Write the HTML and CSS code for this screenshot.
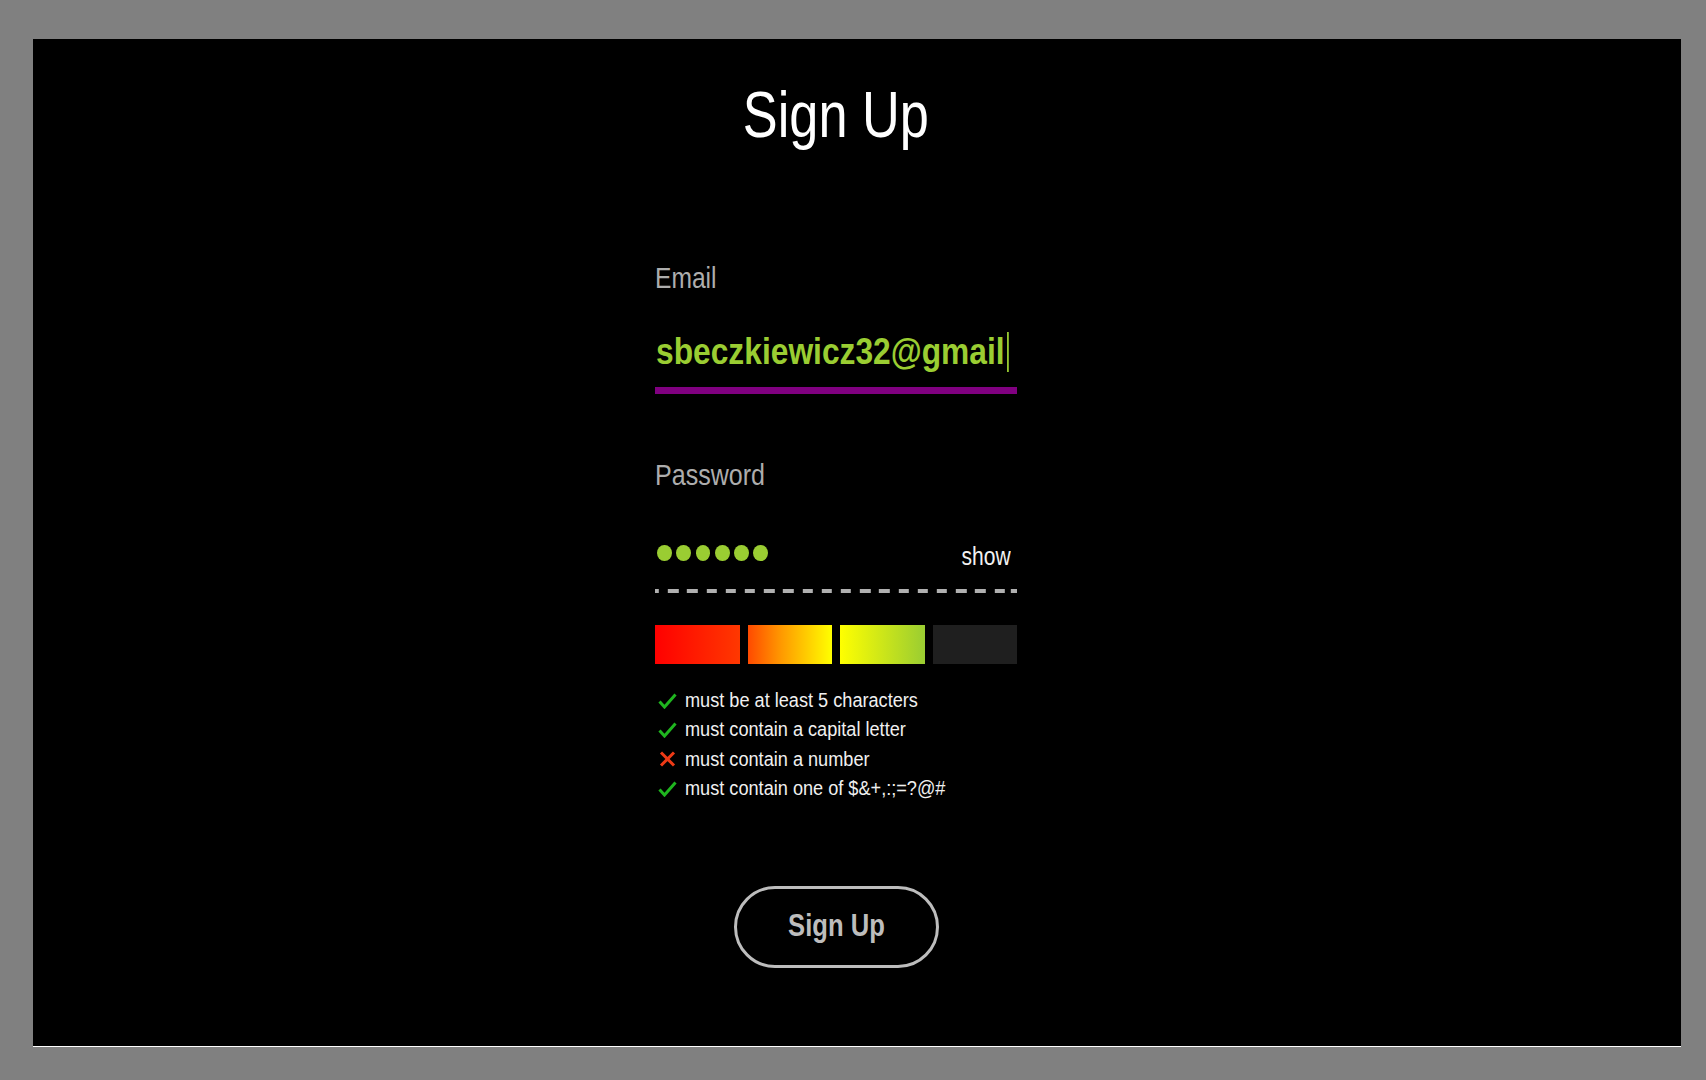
FILE: index.html
```html
<!DOCTYPE html>
<html lang="en">
<head>
<meta charset="utf-8">
<title>Sign Up</title>
<link rel="stylesheet" href="styles.css">
</head>
<body>
<main class="panel">
  <h1 class="title"><span class="narrow narrow-center">Sign Up</span></h1>
  <form class="form">
    <label class="label"><span class="narrow">Email</span></label>
    <div class="email-field">
      <span class="email-value narrow">sbeczkiewicz32@gmail</span>
    </div>

    <label class="label label-password"><span class="narrow">Password</span></label>
    <div class="password-field">
      <div class="dots">
        <span class="dot"></span><span class="dot"></span><span class="dot"></span><span class="dot"></span><span class="dot"></span><span class="dot"></span>
      </div>
      <span class="show narrow narrow-right">show</span>
    </div>
    <div class="dashes"></div>

    <div class="strength">
      <div class="bar bar-1"></div>
      <div class="bar bar-2"></div>
      <div class="bar bar-3"></div>
      <div class="bar bar-4"></div>
    </div>

    <ul class="rules">
      <li class="rule"><svg class="icon" viewBox="0 0 19 16"><path class="ok" d="M1.5 8.5 L6.5 14 L17.5 1.5"/></svg><span class="rule-text narrow">must be at least 5 characters</span></li>
      <li class="rule"><svg class="icon" viewBox="0 0 19 16"><path class="ok" d="M1.5 8.5 L6.5 14 L17.5 1.5"/></svg><span class="rule-text narrow">must contain a capital letter</span></li>
      <li class="rule"><svg class="icon" viewBox="0 0 19 16"><path class="bad" d="M3 1.5 L16 14.5 M16 1.5 L3 14.5"/></svg><span class="rule-text narrow">must contain a number</span></li>
      <li class="rule"><svg class="icon" viewBox="0 0 19 16"><path class="ok" d="M1.5 8.5 L6.5 14 L17.5 1.5"/></svg><span class="rule-text narrow">must contain one of $&amp;+,:;=?@#</span></li>
    </ul>

    <div class="actions">
      <button type="button" class="btn"><span class="btn-text narrow narrow-center">Sign Up</span></button>
    </div>
  </form>
</main>
</body>
</html>
```
FILE: styles.css
```css
html, body {
  margin: 0;
  padding: 0;
}
body {
  background: #808080;
  width: 1706px;
  height: 1080px;
  padding-top: 39px;
  padding-left: 33px;
  box-sizing: border-box;
  font-family: "Liberation Sans", Arial, sans-serif;
}
.narrow {
  display: inline-block;
  transform-origin: left center;
  transform: scaleX(0.82);
  white-space: nowrap;
}
.narrow-center {
  transform-origin: center center;
}
.narrow-right {
  transform-origin: right center;
}
.panel {
  width: 1648px;
  height: 1008px;
  box-sizing: border-box;
  background: #000;
  border-bottom: 1px solid #ffffff;
  display: flex;
  flex-direction: column;
  align-items: center;
  padding-right: 42px;
}
.title {
  margin: 44px 0 0 0;
  font-size: 64px;
  line-height: 64px;
  font-weight: normal;
  color: #ffffff;
}
.title .narrow {
  transform: scaleX(0.817);
}
.form {
  width: 362px;
  display: flex;
  flex-direction: column;
  margin-top: 116px;
}
.label {
  display: block;
  font-size: 30px;
  line-height: 30px;
  color: #adadad;
}
.label-password .narrow {
  transform: scaleX(0.835);
}
.email-field {
  display: flex;
  align-items: flex-start;
  padding-top: 39px;
  padding-bottom: 15px;
  border-bottom: 7px solid #800080;
  height: 40px;
}
.email-value {
  font-size: 36px;
  line-height: 40px;
  font-weight: bold;
  color: #9acd32;
  margin-left: 1px;
  transform: scaleX(0.882);
}
.email-value::after {
  content: "";
  display: inline-block;
  vertical-align: top;
  width: 2px;
  height: 40px;
  margin-left: 3px;
  background: #9acd32;
}
.label-password {
  margin-top: 66px;
}
.password-field {
  display: flex;
  justify-content: space-between;
  align-items: flex-start;
  padding-top: 53px;
  padding-bottom: 20px;
}
.dots {
  display: flex;
  gap: 4.6px;
  margin-top: 2px;
  padding-left: 2px;
}
.dot {
  width: 14.7px;
  height: 16px;
  border-radius: 50%;
  background: #9acd32;
}
.show {
  font-size: 26px;
  line-height: 26px;
  color: #f2f2f2;
  margin-right: 6px;
  transform: scaleX(0.81);
}
.dashes {
  height: 4px;
  background-image: repeating-linear-gradient(90deg, #b0b0b0 0, #b0b0b0 10.5px, transparent 10.5px, transparent 19.2px);
  background-position: -6.2px 0;
}
.strength {
  margin-top: 32px;
  display: flex;
  gap: 8px;
  height: 39px;
}
.bar {
  flex: 1;
}
.bar-1 { background: linear-gradient(90deg, #ff0000, #ff3800); }
.bar-2 { background: linear-gradient(90deg, #ff4a00, #ff9a00 40%, #ffff00); }
.bar-3 { background: linear-gradient(90deg, #ffff00, #9acd32); }
.bar-4 { background: #1f1f1f; }
.rules {
  list-style: none;
  margin: 22px 0 0 0;
  padding: 0;
}
.rule {
  display: flex;
  align-items: center;
  height: 29.3px;
  font-size: 20px;
  line-height: 29.3px;
  color: #f0f0f0;
}
.rule-text {
  transform: scaleX(0.907);
}
.icon {
  width: 19px;
  height: 16px;
  margin-left: 3px;
  margin-right: 8px;
  flex: none;
}
.icon path {
  fill: none;
  stroke-width: 3;
}
.icon .ok { stroke: #1fb51f; }
.icon .bad { stroke: #ee3a16; }
.actions {
  display: flex;
  justify-content: center;
  margin-top: 83px;
}
.btn {
  width: 205px;
  height: 82px;
  box-sizing: border-box;
  border: 3px solid #bdbdbd;
  border-radius: 41px;
  background: #000;
  color: #bdbdbd;
  font-family: inherit;
  font-size: 32px;
  line-height: 32px;
  font-weight: bold;
  padding: 0 0 4px 0;
  margin: 0;
}
.btn-text {
  transform: scaleX(0.8);
}
```
